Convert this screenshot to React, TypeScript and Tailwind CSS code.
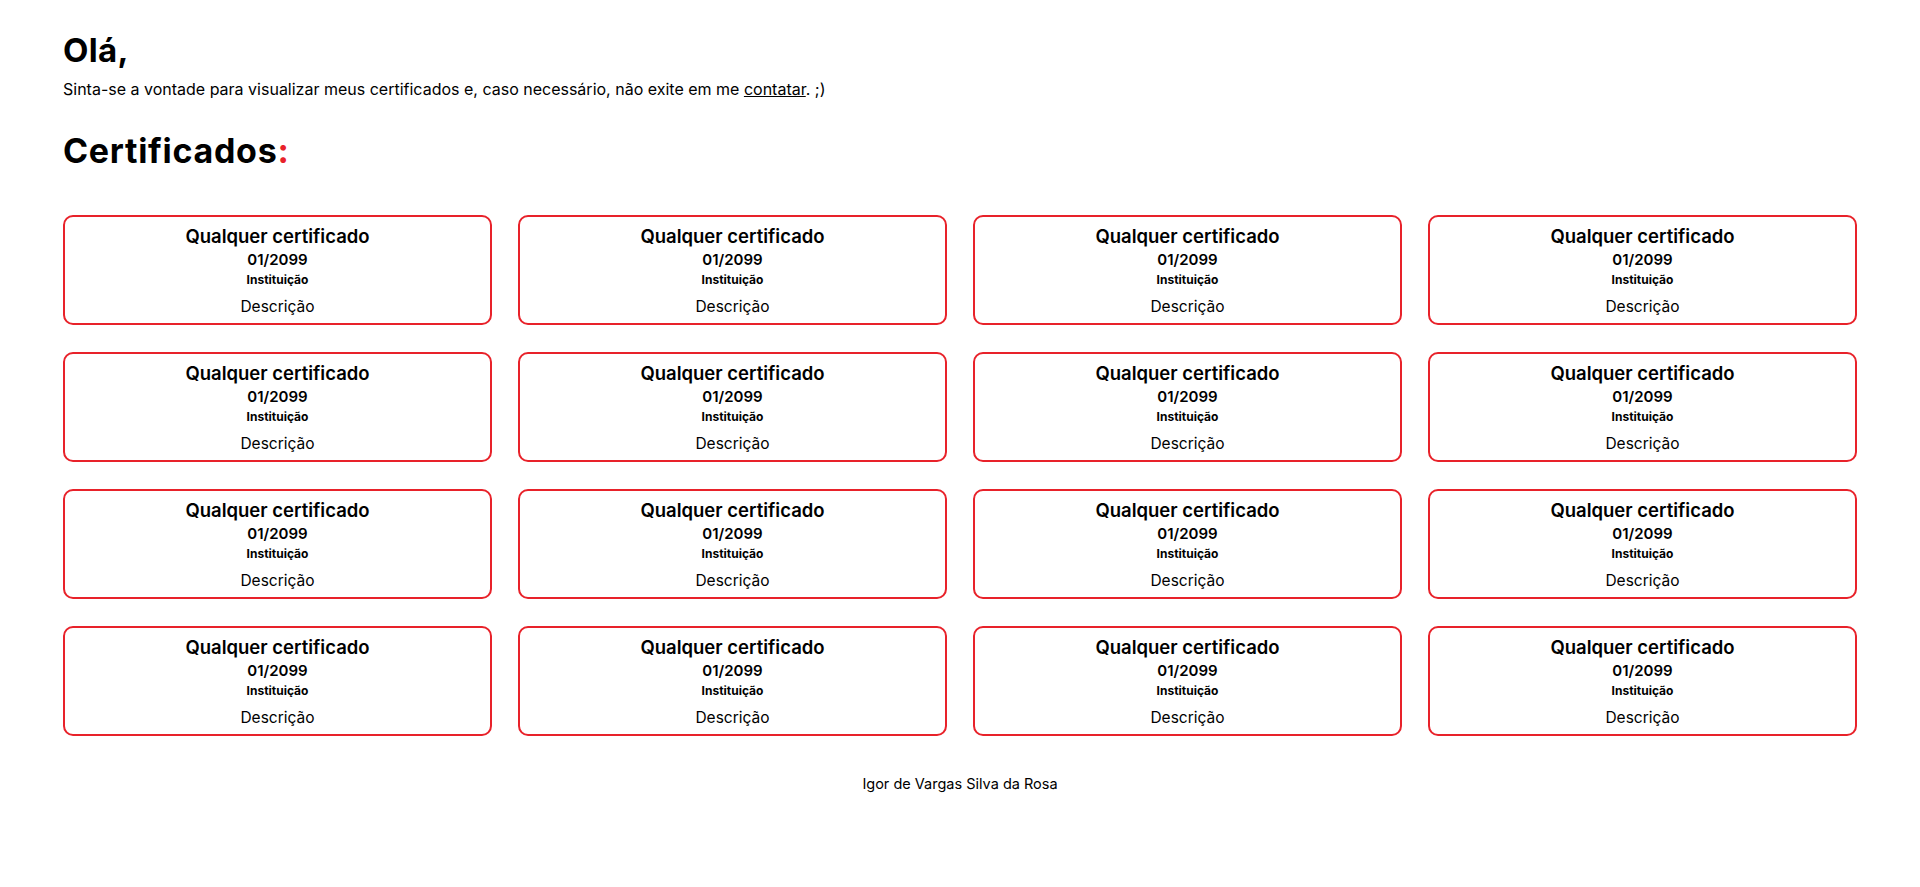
import React from 'react';

const certificados = Array.from({ length: 16 }, (_, i) => ({
  id: i,
  titulo: 'Qualquer certificado',
  data: '01/2099',
  instituicao: 'Instituição',
  descricao: 'Descrição',
}));

const CertCard: React.FC<{ titulo: string; data: string; instituicao: string; descricao: string }> = ({
  titulo,
  data,
  instituicao,
  descricao,
}) => (
  <div className="h-[110px] border-2 border-[#e8222a] rounded-[10px] flex flex-col items-center pt-[7px] text-black">
    <h3 className="text-[18.5px] leading-[24px] font-semibold">{titulo}</h3>
    <h4 className="mt-px text-[15px] leading-[22px] font-semibold">{data}</h4>
    <h5 className="text-[12px] leading-[18px] font-bold">{instituicao}</h5>
    <p className="mt-[6px] text-[15.5px] leading-[24px]">{descricao}</p>
  </div>
);

export default function App() {
  return (
    <div className="min-h-screen bg-white text-black font-['Inter','Noto_Sans',sans-serif]">
      <main className="px-[63px] pt-[30px]">
        <h1 className="text-[33px] leading-[40px] font-bold tracking-[0.3px]">Olá,</h1>
        <p className="mt-[10px] text-[16px] leading-[18px]">
          Sinta-se a vontade para visualizar meus certificados e, caso necessário, não exite em me{' '}
          <a href="#" className="underline">
            contatar
          </a>
          . ;)
        </p>
        <h2 className="mt-[33px] text-[34px] leading-[40px] font-bold tracking-[0.7px]">
          Certificados<span className="text-[#e8222a]">:</span>
        </h2>
        <section className="mt-[44px] grid grid-cols-4 gap-x-[26px] gap-y-[27px]">
          {certificados.map((c) => (
            <CertCard key={c.id} {...c} />
          ))}
        </section>
      </main>
      <footer className="mt-[38px] text-center text-[14.5px] leading-[20px]">Igor de Vargas Silva da Rosa</footer>
    </div>
  );
}
